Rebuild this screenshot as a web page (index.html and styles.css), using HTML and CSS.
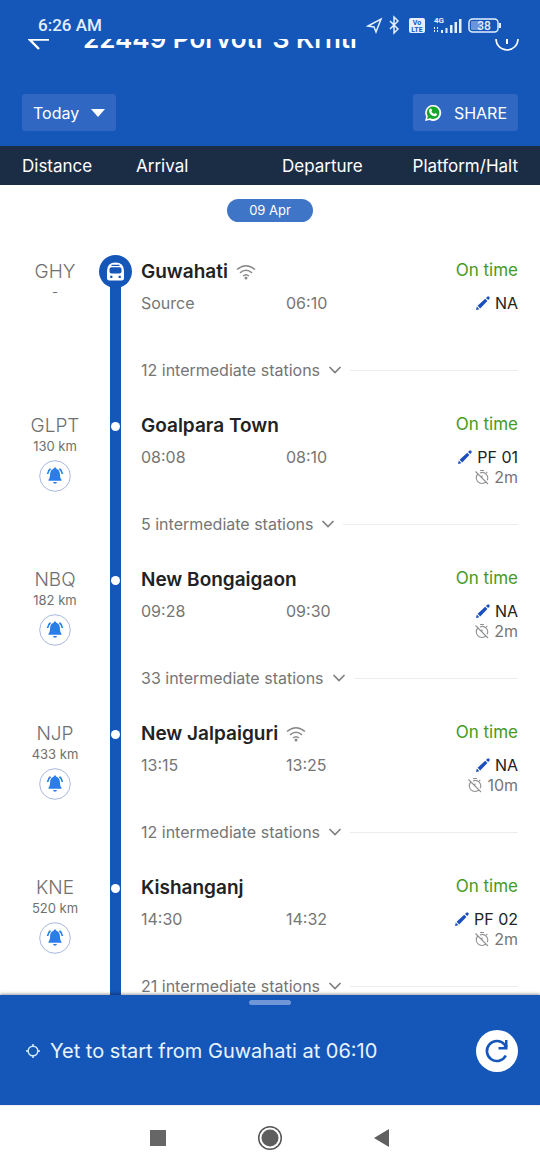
FILE: index.html
```html
<!DOCTYPE html>
<html lang="en">
<head>
<meta charset="utf-8">
<meta name="viewport" content="width=device-width, initial-scale=1">
<title>22449 Porvotr S Krnti</title>
<link rel="stylesheet" href="styles.css">
</head>
<body>
<svg class="sprite" aria-hidden="true">
  <symbol id="pencil" viewBox="0 0 16 16"><path fill="#1a4fbd" d="M1 15l.8-3.400 2.600 2.600zM2.600 10.800L10.200 3.700 12.400 5.900 5.200 13.400zM11 3l1.300-1.300q1-.8 1.700 0l.4.400q.8.800 0 1.700L13.200 5.100z"/></symbol>
  <symbol id="bell" viewBox="0 0 32 32"><circle cx="16" cy="16" r="15.300" fill="#fff" stroke="#a9b8dc"/><path fill="#2b7de9" d="M16 7.500c.8 0 1.200.5 1.300 1.200 2.500.7 3.500 2.800 3.600 5.300.1 3 .5 4.300 1.600 5.800v1H9.500v-1c1.100-1.500 1.500-2.800 1.600-5.800.1-2.500 1.100-4.600 3.600-5.300.1-.7.5-1.200 1.300-1.200zM14 22h4q-.4 1.700-2 1.700T14 22z"/><path fill="none" stroke="#2b7de9" stroke-width="1.700" d="M11.500 8.700Q9 10.500 8.600 14M20.500 8.700Q23 10.500 23.400 14"/></symbol>
  <symbol id="halt" viewBox="0 0 16 16"><g fill="none" stroke="#929292" stroke-width="1.100"><path d="M3.800 5A5.500 5.500 0 1 0 12 12.700M6 3.900A5.500 5.500 0 0 1 13.200 11.200M6 1.500h4M12 4.200l1.300-1.300M1.500 2.500l12.500 12.500M8 6.500v2.500"/></g></symbol>
  <symbol id="chevron" viewBox="0 0 14 10"><path d="M1.500 2l5.500 5.500L12.500 2" fill="none" stroke="#808080" stroke-width="1.700"/></symbol>
  <symbol id="wifi" viewBox="0 0 20 16"><g fill="none" stroke="#8a8a8a" stroke-width="1.500"><path d="M1 5.500Q10-2 19 5.500M4 8.800q6-5 12 0M7 12q3-2.600 6 0"/></g><circle cx="10" cy="14" r="1.500" fill="#8a8a8a"/></symbol>
</svg>
<div class="app">
  <header class="top">
    <div class="status">
      <span class="clock">6:26 AM</span>
      <svg class="status-icons" width="140" height="22" viewBox="0 0 140 22" role="img" aria-label="Location, Bluetooth, VoLTE, 4G, battery 38">
        <g fill="none" stroke="#e4efff" stroke-width="1.500">
          <path d="M2 12L15 5 10 18 8 13z"/>
          <path d="M24 7l8 8-4 4V3l4 4-8 8"/>
          <rect x="103" y="5" width="29" height="13" rx="3.500"/>
        </g>
        <rect x="43" y="4" width="16" height="15" rx="2" fill="#e4efff"/>
        <g class="tiny-dark"><text x="51" y="11" text-anchor="middle">Vo</text><text x="51" y="18" text-anchor="middle">LTE</text></g>
        <text class="net" x="68" y="9">4G</text>
        <path fill="#e4efff" d="M75 16h2v3h-2zM79.500 14h2v5h-2zM84 11h2.500v8H84zM88.500 8h2.500v11h-2.500zM93 5h2.500v14H93zM133 9h2v5h-2z"/>
        <path stroke="#e4efff" d="M68.500 13v6M71.500 13v6" stroke-dasharray="2 1"/>
        <rect x="105" y="7" width="10" height="9" rx="1" fill="#6c94d8"/>
        <text class="battery" x="118" y="16" text-anchor="middle">38</text>
      </svg>
    </div>
    <div class="title-clip">
      <div class="title-bar">
        <button class="icon-button" aria-label="Back"><svg width="24" height="24" viewBox="0 0 24 24"><path d="M23 12.500H3M13 3L3.500 12.500 13 22" fill="none" stroke="#fff" stroke-width="2.400"/></svg></button>
        <h1>22449 Porvotr S Krnti</h1>
        <button class="icon-button" aria-label="Train information"><svg width="24" height="24" viewBox="0 0 24 24"><g fill="none" stroke="#fff" stroke-width="1.600"><circle cx="12" cy="12" r="11"/><path stroke-width="2" d="M12 10v7M12 6v2"/></g></svg></button>
      </div>
    </div>
    <div class="actions">
      <button class="chip">Today <svg width="14" height="8" viewBox="0 0 14 8"><path d="M0 0h14L7 8z" fill="#fff"/></svg></button>
      <button class="chip share"><svg width="18" height="18" viewBox="0 0 18 18"><path d="M1 17l1.200-4.200A8 8 0 1 1 5.500 16z" fill="#fff"/><path d="M3 15l.8-2.800a6.300 6.300 0 1 1 2.300 2.100z" fill="#18a62d"/><path d="M6 4.800q1-.8 1.600.4l.5 1.200-.7 1.100q1 1.900 2.800 2.600l1-1q2 .7 1.900 1.300-.6 2-2.600 1.800Q6 11.500 5.100 7.200 4.900 5.700 6 4.800z" fill="#fff"/></svg>SHARE</button>
    </div>
    <div class="columns"><span>Distance</span><span>Arrival</span><span>Departure</span><span>Platform/Halt</span></div>
  </header>

  <main class="timeline">
    <p class="date">09 Apr</p>
    <ol class="stops">
      <li class="stop origin">
        <div class="place"><span class="code">GHY</span><span class="km">-</span></div>
        <div class="rail"><svg class="train" width="33" height="33" viewBox="0 0 33 33" role="img" aria-label="Train"><circle cx="16.500" cy="16.500" r="16.500" fill="#1556b9"/><path fill="#fff" fill-rule="evenodd" d="M8 23v-7q0-8.500 8.500-8.500T25 16v7q0 2.500-2.500 2.500h-12Q8 25.500 8 23zM10.500 14v2.500q0 2 2 2h8q2 0 2-2V14q0-1.700-2-1.700h-8q-2 0-2 1.700zM12.500 9.700v1.200h8V9.700zM11.200 20.800v2.200h2.200v-2.200zM19.600 20.800v2.200h2.200v-2.200z"/></svg></div>
        <div class="detail">
          <h2>Guwahati <svg width="20" height="16"><use href="#wifi"/></svg></h2><span class="state">On time</span>
          <span class="time">Source</span><span class="time">06:10</span>
          <div class="platform"><button><svg width="16" height="16"><use href="#pencil"/></svg>NA</button></div>
          <button class="between">12 intermediate stations <svg width="14" height="10"><use href="#chevron"/></svg></button>
        </div>
      </li>
      <li class="stop">
        <div class="place"><span class="code">GLPT</span><span class="km">130 km</span><button class="alarm" aria-label="Set alarm for Goalpara Town"><svg width="32" height="32"><use href="#bell"/></svg></button></div>
        <div class="rail"><i class="dot"></i></div>
        <div class="detail">
          <h2>Goalpara Town</h2><span class="state">On time</span>
          <span class="time">08:08</span><span class="time">08:10</span>
          <div class="platform"><button><svg width="16" height="16"><use href="#pencil"/></svg>PF 01</button><span class="halt"><svg width="16" height="16"><use href="#halt"/></svg>2m</span></div>
          <button class="between">5 intermediate stations <svg width="14" height="10"><use href="#chevron"/></svg></button>
        </div>
      </li>
      <li class="stop">
        <div class="place"><span class="code">NBQ</span><span class="km">182 km</span><button class="alarm" aria-label="Set alarm for New Bongaigaon"><svg width="32" height="32"><use href="#bell"/></svg></button></div>
        <div class="rail"><i class="dot"></i></div>
        <div class="detail">
          <h2>New Bongaigaon</h2><span class="state">On time</span>
          <span class="time">09:28</span><span class="time">09:30</span>
          <div class="platform"><button><svg width="16" height="16"><use href="#pencil"/></svg>NA</button><span class="halt"><svg width="16" height="16"><use href="#halt"/></svg>2m</span></div>
          <button class="between">33 intermediate stations <svg width="14" height="10"><use href="#chevron"/></svg></button>
        </div>
      </li>
      <li class="stop">
        <div class="place"><span class="code">NJP</span><span class="km">433 km</span><button class="alarm" aria-label="Set alarm for New Jalpaiguri"><svg width="32" height="32"><use href="#bell"/></svg></button></div>
        <div class="rail"><i class="dot"></i></div>
        <div class="detail">
          <h2>New Jalpaiguri <svg width="20" height="16"><use href="#wifi"/></svg></h2><span class="state">On time</span>
          <span class="time">13:15</span><span class="time">13:25</span>
          <div class="platform"><button><svg width="16" height="16"><use href="#pencil"/></svg>NA</button><span class="halt"><svg width="16" height="16"><use href="#halt"/></svg>10m</span></div>
          <button class="between">12 intermediate stations <svg width="14" height="10"><use href="#chevron"/></svg></button>
        </div>
      </li>
      <li class="stop">
        <div class="place"><span class="code">KNE</span><span class="km">520 km</span><button class="alarm" aria-label="Set alarm for Kishanganj"><svg width="32" height="32"><use href="#bell"/></svg></button></div>
        <div class="rail"><i class="dot"></i></div>
        <div class="detail">
          <h2>Kishanganj</h2><span class="state">On time</span>
          <span class="time">14:30</span><span class="time">14:32</span>
          <div class="platform"><button><svg width="16" height="16"><use href="#pencil"/></svg>PF 02</button><span class="halt"><svg width="16" height="16"><use href="#halt"/></svg>2m</span></div>
          <button class="between">21 intermediate stations <svg width="14" height="10"><use href="#chevron"/></svg></button>
        </div>
      </li>
    </ol>
  </main>

  <section class="sheet">
    <div class="handle"></div>
    <div class="sheet-row">
      <svg width="14" height="14" viewBox="0 0 14 14"><g fill="none" stroke="#d5ecff" stroke-width="1.500"><circle cx="7" cy="7" r="4.800"/><path d="M7 0v2.500M7 11.500V14M0 7h2.500M11.500 7H14"/></g></svg>
      <p>Yet to start from Guwahati at 06:10</p>
      <button class="refresh" aria-label="Refresh"><svg width="42" height="42" viewBox="0 0 42 42"><circle cx="21" cy="21" r="21" fill="#fff"/><path d="M29.800 25.500A10 10 0 1 1 28.500 14.500L31 17" fill="none" stroke="#1556b9" stroke-width="2.600"/><path d="M31.500 10v9.500H22.500v-2.500h5L29 14.500V10z" fill="#1556b9"/></svg></button>
    </div>
  </section>
  <nav class="system">
    <button aria-label="Recent apps"><svg width="16" height="16"><rect width="16" height="16" fill="#666"/></svg></button>
    <button aria-label="Home"><svg width="26" height="26" viewBox="0 0 26 26"><circle cx="13" cy="13" r="11.300" fill="none" stroke="#555" stroke-width="1.500"/><circle cx="13" cy="13" r="8.500" fill="#5e5e5e"/></svg></button>
    <button aria-label="Back"><svg width="16" height="18" viewBox="0 0 16 18"><path d="M15 0v18L0 9z" fill="#606060"/></svg></button>
  </nav>
</div>
</body>
</html>
```

FILE: styles.css
```css
* { box-sizing: border-box; }
body, h1, h2, p, ol { margin: 0; padding: 0; }
body { font-family: Inter, "Open Sans", sans-serif; font-size: 16px; color: #222; background: #fff; }
button { font: inherit; color: inherit; background: none; border: 0; padding: 0; cursor: pointer; }
svg { display: block; flex: none; }
.sprite { display: none; }

.app { height: 100vh; display: flex; flex-direction: column; }

.top { background: #1556b9; color: #fff; flex: none; }
.status { height: 39px; padding: 10px 38px 0; display: flex; justify-content: space-between; align-items: center; }
.status-icons { margin-right: -4px; }
.clock { font-family: Roboto, sans-serif; font-size: 17px; font-weight: 500; color: #e4efff; }
.tiny-dark { font: 700 7px Roboto, sans-serif; fill: #1556b9; }
.net { font: 700 8px Roboto, sans-serif; fill: #e4efff; }
.battery { font: 500 12px Roboto, sans-serif; fill: #e4efff; }

.title-clip { height: 55px; overflow: hidden; }
.title-bar { margin-top: -16px; height: 32px; padding: 0 21px 0 26px; display: flex; align-items: center; }
.title-bar h1 { flex: 1; padding-left: 33px; font-size: 26px; line-height: 32px; font-weight: 600; white-space: nowrap; }
.actions { padding: 0 22px 15px; display: flex; justify-content: space-between; }
.chip { height: 37px; padding: 0 11px; display: flex; align-items: center; gap: 12px; background: #2f67c3; border-radius: 3px; }
.columns { height: 39px; padding: 0 22px; display: grid; grid-template-columns: 114px 146px 1fr auto; align-items: center; background: #1b2d45; font-size: 17px; }

.timeline { flex: 1; min-height: 0; overflow: hidden; padding-top: 14px; }
.date { width: 86px; margin: 0 auto 35px; border-radius: 12px; background: #3f75c7; color: #fff; font-size: 13px; line-height: 23px; text-align: center; }
.stops { list-style: none; }
.stop { display: grid; grid-template-columns: 77px 33px 1fr; padding: 0 22px; height: 154px; }
.place { display: flex; flex-direction: column; align-items: center; padding-right: 11px; color: #707070; }
.code { font-size: 19px; line-height: 30px; font-weight: 300; }
.km { font-size: 13px; line-height: 10px; }
.alarm { margin-top: 9px; }
.rail { display: flex; justify-content: center; background: linear-gradient(#1556b9, #1556b9) center / 11px 100% no-repeat; }
.origin .rail { background-position: center 16px; }
.train { margin-top: -2px; }
.dot { width: 9px; height: 9px; margin-top: 11px; border-radius: 50%; background: #fff; }
.detail { display: grid; grid-template-columns: 145px 1fr auto; grid-template-rows: 30px 73px 20px; padding-left: 9px; }
.detail h2 { grid-column: span 2; display: flex; align-items: center; gap: 8px; font-size: 19px; font-weight: 600; line-height: 30px; }
.state { font-size: 17px; color: #459a22; line-height: 26px; text-align: right; }
.time { padding-top: 6px; line-height: 20px; color: #757575; }
.platform { padding-top: 6px; display: flex; flex-direction: column; align-items: flex-end; line-height: 20px; }
.platform button, .halt { display: flex; align-items: center; gap: 4px; }
.halt { color: #757575; }
.between { grid-column: 1 / -1; display: flex; align-items: center; gap: 8px; line-height: 20px; color: #757575; }
.between::after { content: ""; flex: 1; height: 1px; background: #ececec; }

.sheet { flex: none; height: 110px; padding-top: 5px; background: #1556b9; color: #e8f4ff; box-shadow: 0 -1px 3px #0006; }
.handle { width: 42px; height: 5px; margin: 0 auto; border-radius: 3px; background: #6f97d8; }
.sheet-row { display: flex; align-items: center; padding: 25px 22px 0 26px; }
.sheet p { flex: 1; padding-left: 10px; font-size: 20px; }
.system { flex: none; height: 65px; display: flex; justify-content: center; align-items: center; gap: 91px; }
```
